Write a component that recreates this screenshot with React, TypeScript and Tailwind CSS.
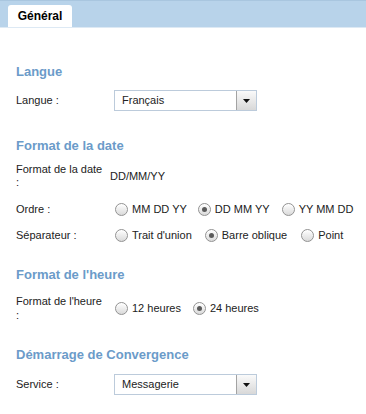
import React, { useState } from "react";

const Radio = ({ label, checked, onClick, gap }: { label: string; checked?: boolean; onClick: () => void; gap: string }) => {
  return (
    <div onClick={onClick} className={`flex items-center cursor-pointer ${gap}`}>
      <div className="w-[13px] h-[13px] rounded-full border border-[#929292] bg-gradient-to-b from-[#ffffff] to-[#dadada] flex items-center justify-center shadow-[inset_0_1px_1px_rgba(255,255,255,0.9)]">
        {checked && <div className="w-[5px] h-[5px] rounded-full bg-[#5a5a5a]" />}
      </div>
      <span className="ml-[4px] text-[11px] text-[#222]">{label}</span>
    </div>
  );
};

const Select = ({ value }: { value: string }) => {
  return (
    <div className="ml-[4px] w-[143px] h-[21px] border border-[#bccbdb] bg-white flex items-center justify-between">
      <span className="pl-[7px] text-[11px] text-[#222]">{value}</span>
      <div className="w-[20px] h-[19px] border-l border-[#a3a3a3] bg-gradient-to-b from-[#fafafa] to-[#d8d8d8] flex items-center justify-center">
        <svg width="7" height="4" viewBox="0 0 7 4">
          <path d="M0 0 L7 0 L3.5 4 Z" fill="#111" />
        </svg>
      </div>
    </div>
  );
};

const Label = ({ children }: { children: React.ReactNode }) => (
  <div className="w-[94px] shrink-0 text-[11px] leading-[13px] text-[#222]">{children}</div>
);

const Heading = ({ children, className }: { children: React.ReactNode; className: string }) => (
  <div className={`text-[13px] leading-[16px] font-bold text-[#6b9bc9] ${className}`}>{children}</div>
);

export default function App() {
  const [order, setOrder] = useState("dmy");
  const [sep, setSep] = useState("slash");
  const [hours, setHours] = useState("24");

  return (
    <div className="w-[366px] h-[414px] bg-white overflow-hidden" style={{ fontFamily: '"Liberation Sans", Arial, sans-serif' }}>
      <div className="h-[28px] bg-[#b8d3ea] border-t border-[#a9c6df] border-b border-b-[#dde9f4] flex items-end pl-[8px]">
        <div className="w-[64px] h-[22px] bg-white rounded-t-[3px] flex items-center justify-center text-[12px] font-bold text-black">
          Général
        </div>
      </div>

      <div className="pl-[16px]">
        <Heading className="mt-[36px]">Langue</Heading>
        <div className="flex items-center mt-[10px]">
          <Label>Langue :</Label>
          <Select value="Français" />
        </div>

        <Heading className="mt-[27px]">Format de la date</Heading>
        <div className="flex items-center mt-[9px] h-[26px]">
          <Label>
            Format de la date
            <br />:
          </Label>
          <span className="text-[11px] text-[#222]">DD/MM/YY</span>
        </div>
        <div className="flex items-center mt-[7px] h-[26px]">
          <Label>Ordre :</Label>
          <div className="flex items-center ml-[5px]">
            <Radio label="MM DD YY" checked={order === "mdy"} onClick={() => setOrder("mdy")} gap="mr-[11px]" />
            <Radio label="DD MM YY" checked={order === "dmy"} onClick={() => setOrder("dmy")} gap="mr-[12px]" />
            <Radio label="YY MM DD" checked={order === "ymd"} onClick={() => setOrder("ymd")} gap="" />
          </div>
        </div>
        <div className="flex items-center h-[26px]">
          <Label>Séparateur :</Label>
          <div className="flex items-center ml-[5px]">
            <Radio label="Trait d'union" checked={sep === "dash"} onClick={() => setSep("dash")} gap="mr-[13px]" />
            <Radio label="Barre oblique" checked={sep === "slash"} onClick={() => setSep("slash")} gap="mr-[14px]" />
            <Radio label="Point" checked={sep === "dot"} onClick={() => setSep("dot")} gap="" />
          </div>
        </div>

        <Heading className="mt-[19px]">Format de l'heure</Heading>
        <div className="flex items-center mt-[11px]">
          <div className="w-[94px] shrink-0 text-[11px] leading-[14px] text-[#222]">
            Format de l'heure
            <br />:
          </div>
          <div className="flex items-center ml-[5px]">
            <Radio label="12 heures" checked={hours === "12"} onClick={() => setHours("12")} gap="mr-[12px]" />
            <Radio label="24 heures" checked={hours === "24"} onClick={() => setHours("24")} gap="" />
          </div>
        </div>

        <Heading className="mt-[25px]">Démarrage de Convergence</Heading>
        <div className="flex items-center mt-[11px]">
          <Label>Service :</Label>
          <Select value="Messagerie" />
        </div>
      </div>
    </div>
  );
}
